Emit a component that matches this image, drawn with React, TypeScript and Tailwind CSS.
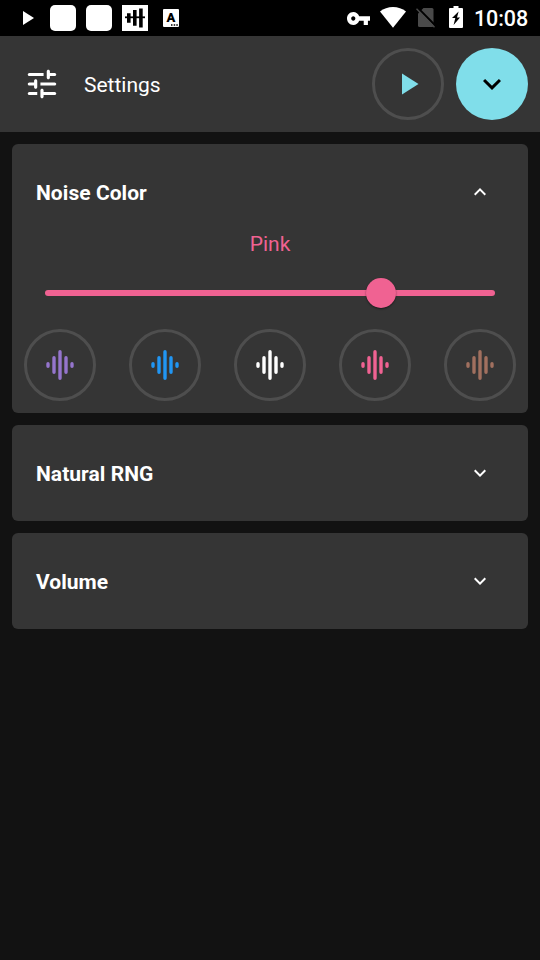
import React, { useState } from 'react';
import clsx from 'clsx';

interface NoiseColor {
  name: string;
  text: string;
  bg: string;
  value: number;
}

const NOISE_COLORS: NoiseColor[] = [
  { name: 'Violet', text: 'text-[#9575cd]', bg: 'bg-[#9575cd]', value: 0 },
  { name: 'Blue', text: 'text-[#2196f3]', bg: 'bg-[#2196f3]', value: 25 },
  { name: 'White', text: 'text-white', bg: 'bg-white', value: 50 },
  { name: 'Pink', text: 'text-[#f06292]', bg: 'bg-[#f06292]', value: 75 },
  { name: 'Brown', text: 'text-[#a1705f]', bg: 'bg-[#a1705f]', value: 100 },
];

const Chevron: React.FC<{ up?: boolean; className?: string }> = ({ up, className }) => (
  <svg viewBox="0 0 24 24" fill="currentColor" className={className}>
    {up ? (
      <path d="M12 8l-6 6 1.41 1.41L12 10.83l4.59 4.58L18 14z" />
    ) : (
      <path d="M16.59 8.59L12 13.17 7.41 8.59 6 10l6 6 6-6z" />
    )}
  </svg>
);

const TuneIcon = () => (
  <svg viewBox="0 0 24 24" fill="currentColor" className="h-[38px] w-[38px]">
    <path d="M3 18c0 .55.45 1 1 1h5v-2H4c-.55 0-1 .45-1 1zM3 6c0 .55.45 1 1 1h9V5H4c-.55 0-1 .45-1 1zm10 14v-1h7c.55 0 1-.45 1-1s-.45-1-1-1h-7v-1c0-.55-.45-1-1-1s-1 .45-1 1v4c0 .55.45 1 1 1s1-.45 1-1zM7 10v1H4c-.55 0-1 .45-1 1s.45 1 1 1h3v1c0 .55.45 1 1 1s1-.45 1-1v-4c0-.55-.45-1-1-1s-1 .45-1 1zm14 2c0-.55-.45-1-1-1h-9v2h9c.55 0 1-.45 1-1zm-5-3c.55 0 1-.45 1-1V7h3c.55 0 1-.45 1-1s-.45-1-1-1h-3V4c0-.55-.45-1-1-1s-1 .45-1 1v4c0 .55.45 1 1 1z" />
  </svg>
);

const WaveIcon = () => (
  <svg viewBox="0 0 36 36" stroke="currentColor" strokeWidth="3.4" strokeLinecap="round" className="h-9 w-9">
    <path d="M6 16.7v2.6M12 10.7v14.6M18 4.7v26.6M24 10.7v14.6M30 16.7v2.6" />
  </svg>
);

const StatusBar = () => (
  <div className="flex h-9 shrink-0 items-center justify-between bg-black pr-3 pl-[23px] text-white">
    <div className="flex items-center">
      <svg viewBox="0 0 11 14" fill="currentColor" className="h-[14px] w-[11px]">
        <path d="M0 0l11 7-11 7z" />
      </svg>
      <div className="ml-4 h-[26px] w-[26px] rounded-[5px] bg-white" />
      <div className="ml-[10px] h-[26px] w-[26px] rounded-[5px] bg-white" />
      {/* Equalizer notification */}
      <svg viewBox="0 0 26 26" fill="none" stroke="#000" className="ml-[10px] h-[26px] w-[26px] bg-white">
        <path d="M3 12.3h20" strokeWidth="1.8" />
        <path d="M6.800 8.200v9.600M12.800 5v15.700M18.900 3.500v19" strokeWidth="3.600" />
      </svg>
      <svg viewBox="0 0 16 18" className="ml-[15px] h-[18px] w-4 rounded-[1px] bg-white">
        <text x="8" y="13" textAnchor="middle" fontFamily="Roboto, sans-serif" fontWeight="900" fontSize="13">A</text>
        <path d="M8 15.300h1.500v1.500H8zM10.700 15.300h1.500v1.500h-1.500zM13.300 15.300h1.500v1.500h-1.500z" />
      </svg>
    </div>

    <div className="flex items-center">
      {/* VPN key */}
      <svg viewBox="1 6 22 12" fill="currentColor" className="h-[13px] w-[23px]" preserveAspectRatio="none">
        <path d="M12.65 10C11.83 7.67 9.61 6 7 6c-3.31 0-6 2.69-6 6s2.69 6 6 6c2.61 0 4.83-1.67 5.65-4H17v4h4v-4h2v-4H12.65zM7 14c-1.1 0-2-.9-2-2s.9-2 2-2 2 .9 2 2-.9 2-2 2z" />
      </svg>
      <svg viewBox="0 0 26 21" fill="currentColor" className="-mt-px ml-[10px] h-[21px] w-[26px]">
        <path d="M13 20.8L0 4.6C3.6 1.6 8.1 0 13 0s9.4 1.6 13 4.6z" />
      </svg>
      {/* No SIM */}
      <svg viewBox="0 0 20 21" className="-mt-px ml-[10px] h-[21px] w-5">
        <path d="M7.500 1H16a1.500 1.500 0 0 1 1.500 1.500v16a1.500 1.500 0 0 1-1.500 1.500H3.500A1.500 1.500 0 0 1 2 18.500V6.500z" fill="#4a4a4a" />
        <path d="M1.500 .5L20 19.200" stroke="#000" strokeWidth="2" />
        <path d="M.5 1.800L18.500 20.200" stroke="#4a4a4a" strokeWidth="1.400" />
      </svg>
      {/* Charging battery */}
      <svg viewBox="0 0 14 22" className="-mt-[2px] ml-[13px] h-[22px] w-[14px]">
        <path d="M4.5 0h5v2H13a1 1 0 0 1 1 1v18a1 1 0 0 1-1 1H1a1 1 0 0 1-1-1V3a1 1 0 0 1 1-1h3.500z" fill="#fff" />
        <path d="M9.600 5.500L3 12h3.300L4.600 19 11 11.500H8z" fill="#000" />
      </svg>
      <span className="ml-[11px] w-[54px] pt-[2px] text-right text-[21.5px] leading-9 font-medium tracking-[-0.1px] whitespace-nowrap">
        10:08
      </span>
    </div>
  </div>
);

interface CardProps {
  title: string;
  open?: boolean;
  onToggle: () => void;
  children?: React.ReactNode;
}

const Card: React.FC<CardProps> = ({ title, open, onToggle, children }) => (
  <section className="rounded-md bg-[#353535]">
    <button onClick={onToggle} className="flex h-24 w-full items-center justify-between px-6 text-white">
      <span className="pt-1 text-[21px] font-bold tracking-[0.05px]">{title}</span>
      <Chevron up={open} className="mr-3 h-6 w-6" />
    </button>
    {open && children}
  </section>
);

const App: React.FC = () => {
  const [selected, setSelected] = useState(3);
  const [openCard, setOpenCard] = useState('Noise Color');
  const color = NOISE_COLORS[selected];

  const toggle = (title: string) => setOpenCard(openCard === title ? '' : title);

  return (
    <div className="flex h-screen w-full flex-col overflow-hidden bg-[#121212] font-['Roboto',sans-serif]">
      <StatusBar />

      <header className="flex h-24 shrink-0 items-center bg-[#353535] pr-3 pl-[23px] text-white">
        <TuneIcon />
        <h1 className="ml-[23px] flex-1 pt-1 text-[21px]">Settings</h1>
        <button className="flex h-[72px] w-[72px] items-center justify-center rounded-full border-3 border-[#4e4e4e] text-[#80deea]">
          <svg viewBox="0 0 24 24" fill="currentColor" className="h-9 w-9">
            <path d="M8 5v14l11-7z" />
          </svg>
        </button>
        <button className="ml-3 flex h-[72px] w-[72px] items-center justify-center rounded-full bg-[#80deea] text-black">
          <Chevron className="h-9 w-9" />
        </button>
      </header>

      <main className="flex flex-col gap-3 p-3">
        <Card title="Noise Color" open={openCard === 'Noise Color'} onToggle={() => toggle('Noise Color')}>
          <div className="-mt-3 h-[185px]">
            <p className={clsx('h-8 text-center text-[21px] leading-8', color.text)}>{color.name}</p>
            {/* Slider, the thumb travels between the two round caps */}
            <div className="mx-[33px] mt-[18px] flex h-[30px] items-center">
              <div className={clsx('relative h-[6px] w-full rounded-[3px]', color.bg)}>
                <div
                  className={clsx('absolute -top-3 -ml-[15px] h-[30px] w-[30px] rounded-full shadow-[0_1px_2px_rgba(0,0,0,0.5)]', color.bg)}
                  style={{ left: `${color.value - 0.3}%` }}
                />
              </div>
            </div>
            <div className="mt-[21px] flex justify-between px-3">
              {NOISE_COLORS.map((c, idx) => (
                <button
                  key={c.name}
                  aria-label={c.name}
                  onClick={() => setSelected(idx)}
                  className={clsx('flex h-[72px] w-[72px] items-center justify-center rounded-full border-3 border-[#4e4e4e]', c.text)}
                >
                  <WaveIcon />
                </button>
              ))}
            </div>
          </div>
        </Card>
        <Card title="Natural RNG" open={openCard === 'Natural RNG'} onToggle={() => toggle('Natural RNG')} />
        <Card title="Volume" open={openCard === 'Volume'} onToggle={() => toggle('Volume')} />
      </main>
    </div>
  );
};

export default App;
